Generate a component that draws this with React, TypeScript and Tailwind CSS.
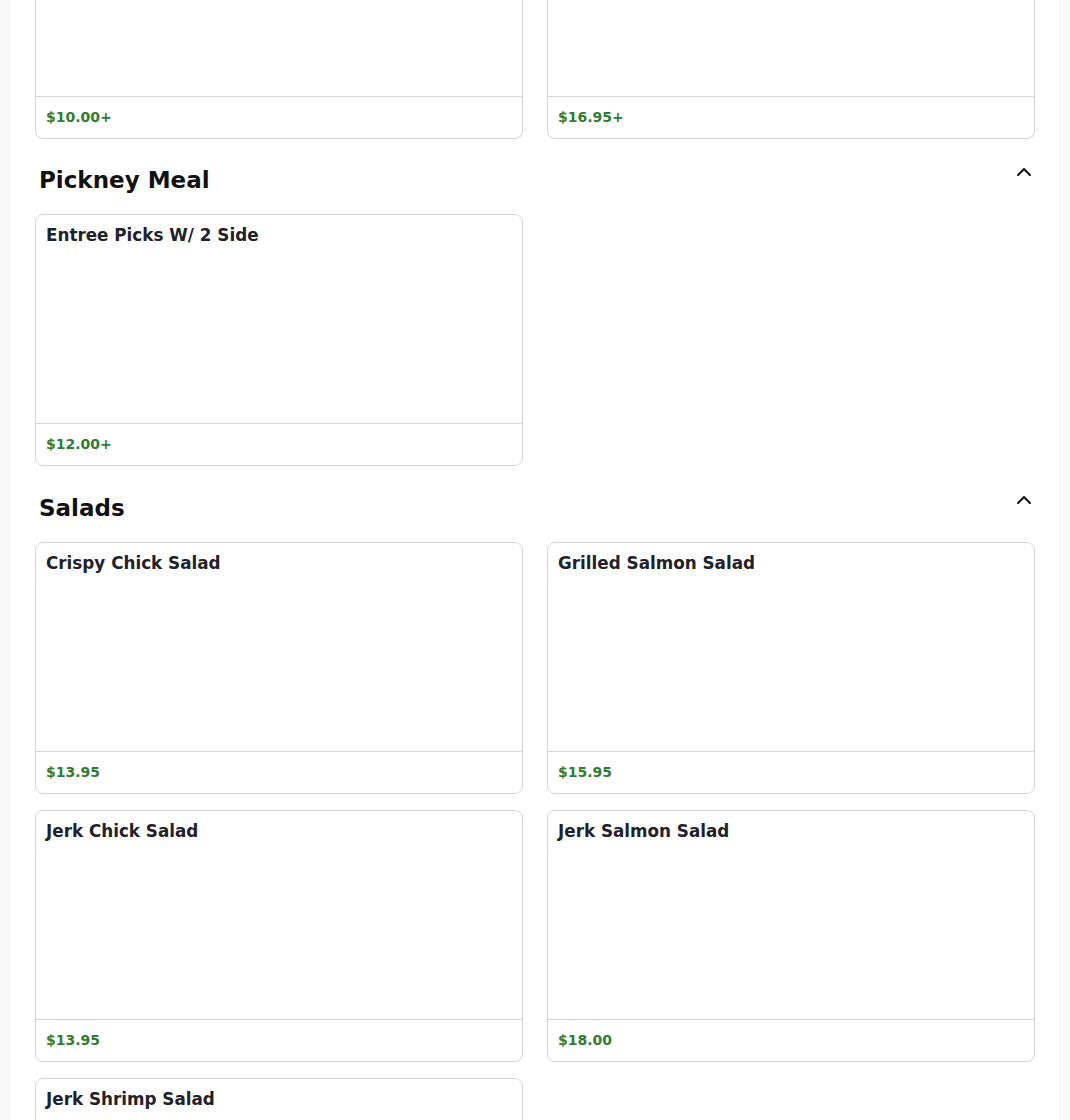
import { ChevronUp } from "lucide-react";

type Item = { name?: string; price: string };

const topRow: Item[] = [{ price: "$10.00+" }, { price: "$16.95+" }];

const sections: { title: string; items: Item[] }[] = [
  { title: "Pickney Meal", items: [{ name: "Entree Picks W/ 2 Side", price: "$12.00+" }] },
  {
    title: "Salads",
    items: [
      { name: "Crispy Chick Salad", price: "$13.95" },
      { name: "Grilled Salmon Salad", price: "$15.95" },
      { name: "Jerk Chick Salad", price: "$13.95" },
      { name: "Jerk Salmon Salad", price: "$18.00" },
      { name: "Jerk Shrimp Salad", price: "$15.95" },
    ],
  },
];

function PriceRow({ price }: { price: string }) {
  return (
    <div className="h-[42px] border-t border-[#d4d4d4] px-2.5 pb-px flex items-center">
      <span className="text-sm font-bold text-[#2e7d32]">{price}</span>
    </div>
  );
}

function MenuCard({ item }: { item: Item }) {
  return (
    <div className="border border-[#d4d4d4] rounded-lg bg-white flex flex-col">
      <div className="h-[208px] px-2.5 pt-2">
        <h3 className="text-[16.8px] leading-6 font-bold text-[#212129]">{item.name}</h3>
      </div>
      <PriceRow price={item.price} />
    </div>
  );
}

// cards cut off by the scroll position at the top of the shot
function ClippedCard({ item }: { item: Item }) {
  return (
    <div className="border border-t-0 border-[#d4d4d4] rounded-b-lg bg-white flex flex-col">
      <div className="h-[96px]" />
      <PriceRow price={item.price} />
    </div>
  );
}

export default function App() {
  return (
    <div
      className="min-h-screen bg-[#f8f8f8]"
      style={{ fontFamily: '"DejaVu Sans", "Liberation Sans", sans-serif' }}
    >
      <div className="max-w-[1048px] mx-auto bg-white px-6 pb-10">
        <div className="grid grid-cols-2 gap-x-6 gap-y-4">
          {topRow.map((item, i) => (
            <ClippedCard key={i} item={item} />
          ))}
        </div>

        {sections.map((section, i) => (
          <section key={section.title}>
            <div
              className={`${i === 0 ? "pt-[21px]" : "pt-[22px]"} mb-5 flex items-start justify-between`}
            >
              <h2 className="mt-[6px] pl-1 text-[23px] leading-[28px] font-bold text-[#111]">
                {section.title}
              </h2>
              <ChevronUp size={24} strokeWidth={2} className="text-[#111] -mr-px" />
            </div>
            <div className="grid grid-cols-2 gap-x-6 gap-y-4">
              {section.items.map((item) => (
                <MenuCard key={item.name} item={item} />
              ))}
            </div>
          </section>
        ))}
      </div>
    </div>
  );
}
